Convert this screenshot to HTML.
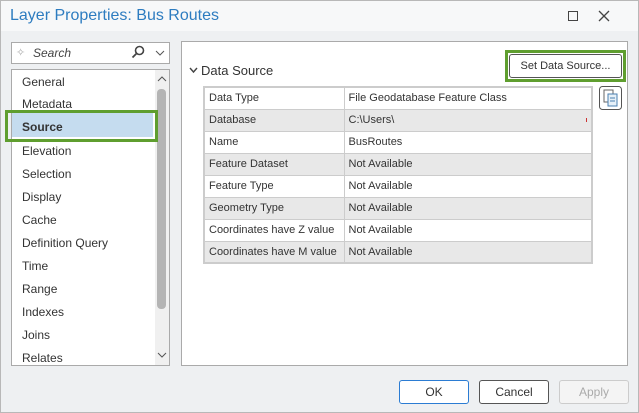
<!DOCTYPE html>
<html><head><style>
*{box-sizing:border-box;margin:0;padding:0}
body{width:639px;height:413px;background:#eef0f2;font-family:"Liberation Sans",sans-serif;font-size:12px;color:#333;position:relative;overflow:hidden}
.abs{position:absolute}
#title{left:0;top:0;width:639px;height:31px;background:#f7f8f9}
#title span{position:absolute;left:10px;top:7px;font-size:16px;color:#2d7cc0}
#outer{left:0;top:0;width:639px;height:413px;border:1px solid #b8b8b8}
.item{position:absolute;left:22px;font-size:12px;color:#333}
table{border-collapse:collapse;position:absolute;left:203px;top:86px;width:390px;border:2px solid #ccc}
td{height:22px;border:1px solid #ccc;padding-left:4px;font-size:11px;color:#333}
tr:nth-child(even) td{background:#e8e8e8}
td:first-child{width:140px}
.btn{position:absolute;top:380px;width:70px;height:24px;border:1px solid #555;border-radius:3px;background:#fff;text-align:center;line-height:22px;font-size:12px}
</style></head><body>
<div id="title" class="abs"><span>Layer Properties: Bus Routes</span></div>
<div class="abs" style="left:568px;top:11px;width:10px;height:10px;border:1.3px solid #444"></div>
<svg class="abs" style="left:598px;top:10px" width="12" height="12"><path d="M1 1L11 11M11 1L1 11" stroke="#444" stroke-width="1.3"/></svg>

<div class="abs" style="left:11px;top:42px;width:159px;height:22px;background:#fff;border:1px solid #aaa"></div>
<div class="abs" style="left:16px;top:46px;font-size:11px;color:#aaa">✧</div>
<div class="abs" style="left:33px;top:46px;font-size:12px;font-style:italic;color:#444">Search</div>
<svg class="abs" style="left:131px;top:45px" width="14" height="14"><circle cx="8.5" cy="5.5" r="4" fill="none" stroke="#444" stroke-width="1.6"/><line x1="5.5" y1="8.5" x2="1.5" y2="12.5" stroke="#444" stroke-width="1.8"/></svg>
<svg class="abs" style="left:155px;top:49px" width="10" height="8"><polyline points="1,2 5,6 9,2" fill="none" stroke="#555" stroke-width="1"/></svg>

<div class="abs" style="left:11px;top:69px;width:159px;height:297px;background:#fff;border:1px solid #aaa"></div>
<div class="abs" style="left:155px;top:70px;width:14px;height:295px;background:#f0f0f0"></div>
<div class="abs" style="left:157px;top:89px;width:9px;height:220px;background:#b4b4b4;border-radius:4px"></div>
<svg class="abs" style="left:157px;top:76px" width="10" height="7"><polyline points="1,5 5,1 9,5" fill="none" stroke="#555" stroke-width="1"/></svg>
<svg class="abs" style="left:157px;top:351px" width="10" height="7"><polyline points="1,2 5,6 9,2" fill="none" stroke="#555" stroke-width="1"/></svg>
<div class="abs" style="left:12px;top:113px;width:141px;height:24px;background:#c5dcef"></div>
<div class="abs" style="left:5px;top:110px;width:153px;height:32px;border:3px solid #5f9e2f"></div>
<div class="item" style="top:75px">General</div>
<div class="item" style="top:97px">Metadata</div>
<div class="item" style="top:120px;font-weight:bold">Source</div>
<div class="item" style="top:144px">Elevation</div>
<div class="item" style="top:167px">Selection</div>
<div class="item" style="top:190px">Display</div>
<div class="item" style="top:213px">Cache</div>
<div class="item" style="top:236px">Definition Query</div>
<div class="item" style="top:259px">Time</div>
<div class="item" style="top:282px">Range</div>
<div class="item" style="top:305px">Indexes</div>
<div class="item" style="top:328px">Joins</div>
<div class="item" style="top:351px">Relates</div>

<div class="abs" style="left:181px;top:41px;width:447px;height:325px;background:#fff;border:1px solid #aaa"></div>
<svg class="abs" style="left:189px;top:67px" width="9" height="7"><polyline points="1,1 4.5,5 8,1" fill="none" stroke="#444" stroke-width="1.4"/></svg>
<div class="abs" style="left:201px;top:63px;font-size:13px;color:#333">Data Source</div>
<div class="abs" style="left:505px;top:50px;width:121px;height:32px;border:3px solid #5f9e2f"></div>
<div class="abs" style="left:509px;top:54px;width:113px;height:24px;border:1px solid #555;border-radius:3px;background:#fff;text-align:center;line-height:22px;font-size:11px">Set Data Source...</div>
<svg class="abs" style="left:599px;top:86px" width="23" height="24"><rect x="0.5" y="0.5" width="22" height="23" rx="3" fill="#fff" stroke="#555"/><rect x="5" y="4" width="9" height="12" fill="#fff" stroke="#666"/><rect x="9" y="8" width="9" height="12" fill="#e6f0f8" stroke="#4a7fb0"/><line x1="11" y1="12" x2="16" y2="12" stroke="#4a7fb0"/><line x1="11" y1="15" x2="16" y2="15" stroke="#4a7fb0"/></svg>
<table>
<tr><td>Data Type</td><td>File Geodatabase Feature Class</td></tr>
<tr><td>Database</td><td>C:\Users\</td></tr>
<tr><td>Name</td><td>BusRoutes</td></tr>
<tr><td>Feature Dataset</td><td>Not Available</td></tr>
<tr><td>Feature Type</td><td>Not Available</td></tr>
<tr><td>Geometry Type</td><td>Not Available</td></tr>
<tr><td>Coordinates have Z value</td><td>Not Available</td></tr>
<tr><td>Coordinates have M value</td><td>Not Available</td></tr>
</table>
<div class="abs" style="left:586px;top:118px;width:1px;height:4px;background:#c33"></div>

<div class="btn" style="left:399px;border-color:#2b7cd3">OK</div>
<div class="btn" style="left:479px">Cancel</div>
<div class="btn" style="left:559px;border-color:#ccc;color:#aaa;background:#f4f4f4">Apply</div>
<div id="outer" class="abs"></div>
</body></html>
